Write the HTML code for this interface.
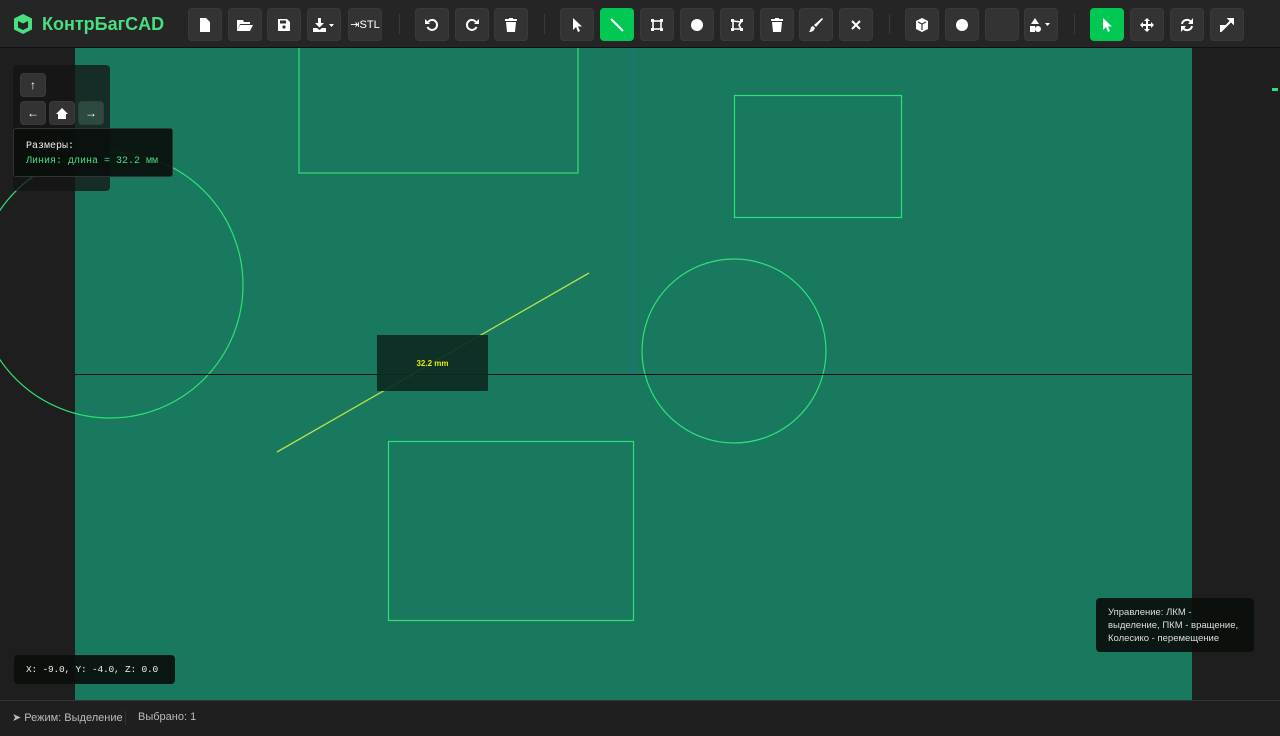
<!DOCTYPE html><html><head><meta charset="utf-8"><style>
*{margin:0;padding:0;box-sizing:border-box}
body{width:1280px;height:736px;overflow:hidden;background:#1e1e1e;font-family:"Liberation Sans",sans-serif;position:relative}
.tb{position:absolute;left:0;top:0;width:1280px;height:48px;background:#252525;border-bottom:1px solid #111;z-index:5}
.b{position:absolute;top:8px;width:34px;height:33px;background:#333;border-radius:4px;border:1px solid #3a3a3a;color:#fff;font-size:13px;display:flex;align-items:center;justify-content:center}
.g{background:#00c853;border-color:#00c853}
.sep{position:absolute;top:14px;width:1px;height:20px;background:#3a3a3a}
.logo{position:absolute;left:12px;top:13px;color:#4ade80;font-weight:bold;font-size:18px;display:flex;align-items:center;gap:8px}
.cv{position:absolute;left:75px;top:48px;width:1117px;height:652px;background:#19795e}
.st{position:absolute;left:0;top:700px;width:1280px;height:36px;background:#1f1f1f;border-top:1px solid #333;color:#bbb;font-size:11px}
.mono{font-family:"Liberation Mono",monospace}
</style></head><body>
<div class="tb">
<div class="logo"><svg width="22" height="22" viewBox="0 0 22 22"><path d="M11 1L20 5.5V16.5L11 21L2 16.5V5.5Z" fill="#4ade80"/><path d="M6 8L11 10.5L16 8V14.5L11 17L6 14.5Z" fill="#252525"/></svg>КонтрБагCAD</div>
<div class="b" style="left:188px"><svg width="12" height="14"><path d="M1 0H7L11 4V14H1Z" fill="#fff"/></svg></div>
<div class="b" style="left:228px"><svg width="16" height="12"><path d="M0 1H6L7 3H13V5H3L0 12Z M3 6H16L13 12H0Z" fill="#fff"/></svg></div>
<div class="b" style="left:267px"><svg width="12" height="12"><path d="M0 0H9L12 3V12H0Z" fill="#fff"/><rect x="2" y="1.5" width="6" height="3" fill="#333"/><circle cx="6" cy="8" r="1.6" fill="#333"/></svg></div>
<div class="b" style="left:307px"><svg width="22" height="14"><path d="M5 0H8V5H11L6.5 9.5L2 5H5Z M0 10H4L6.5 12L9 10H13V14H0Z" fill="#fff"/><path d="M16 6H21L18.5 9Z" fill="#fff"/></svg></div>
<div class="b" style="left:348px;font-size:11px">⇥STL</div>
<div class="sep" style="left:399px"></div>
<div class="b" style="left:415px"><svg width="14" height="14"><path d="M3 4A5 5 0 1 1 2.5 9" fill="none" stroke="#fff" stroke-width="2"/><path d="M0 1V6H5Z" fill="#fff"/></svg></div>
<div class="b" style="left:455px"><svg width="14" height="14"><path d="M11 4A5 5 0 1 0 11.5 9" fill="none" stroke="#fff" stroke-width="2"/><path d="M14 1V6H9Z" fill="#fff"/></svg></div>
<div class="b" style="left:494px"><svg width="12" height="14"><rect x="0" y="1" width="12" height="2" fill="#fff"/><rect x="4" y="0" width="4" height="2" fill="#fff"/><path d="M1 4H11L10 14H2Z" fill="#fff"/></svg></div>
<div class="sep" style="left:544px"></div>
<div class="b" style="left:560px"><svg width="10" height="14"><path d="M1 0V12L4 9L6 14L8 13L6 8.5H10Z" fill="#fff"/></svg></div>
<div class="b g" style="left:600px"><svg width="16" height="16"><line x1="2" y1="2" x2="14" y2="14" stroke="#fff" stroke-width="2"/></svg></div>
<div class="b" style="left:640px"><svg width="12" height="12"><rect x="2" y="2" width="8" height="8" fill="none" stroke="#fff" stroke-width="1.6"/><rect x="0" y="0" width="3" height="3" fill="#fff"/><rect x="9" y="0" width="3" height="3" fill="#fff"/><rect x="0" y="9" width="3" height="3" fill="#fff"/><rect x="9" y="9" width="3" height="3" fill="#fff"/></svg></div>
<div class="b" style="left:680px"><svg width="14" height="14"><circle cx="7" cy="7" r="6" fill="#fff"/></svg></div>
<div class="b" style="left:720px"><svg width="12" height="12"><path d="M2 2L10 3L8 6L10 10H2Z" fill="none" stroke="#fff" stroke-width="1.6"/><rect x="0" y="0" width="3" height="3" fill="#fff"/><rect x="9" y="0" width="3" height="3" fill="#fff"/><rect x="0" y="9" width="3" height="3" fill="#fff"/><rect x="9" y="9" width="3" height="3" fill="#fff"/></svg></div>
<div class="b" style="left:760px"><svg width="12" height="14"><rect x="0" y="1" width="12" height="2" fill="#fff"/><rect x="4" y="0" width="4" height="2" fill="#fff"/><path d="M1 4H11L10 14H2Z" fill="#fff"/></svg></div>
<div class="b" style="left:799px"><svg width="14" height="14"><path d="M13 0L14 1L7 9L5 7Z" fill="#fff"/><path d="M4 8L6 10C5 13 3 14 0 14C2 12 1 9 4 8Z" fill="#fff"/></svg></div>
<div class="b" style="left:839px"><svg width="10" height="10"><path d="M1 1L9 9M9 1L1 9" stroke="#fff" stroke-width="2"/></svg></div>
<div class="sep" style="left:889px"></div>
<div class="b" style="left:905px"><svg width="12" height="14"><path d="M6 0L12 3V11L6 14L0 11V3Z" fill="#fff"/><path d="M2 4L6 6L10 4" stroke="#333" fill="none" stroke-width="1.2"/><path d="M6 6V12" stroke="#333" stroke-width="1.2"/></svg></div>
<div class="b" style="left:945px"><svg width="14" height="14"><circle cx="7" cy="7" r="6" fill="#fff"/></svg></div>
<div class="b" style="left:985px"></div>
<div class="b" style="left:1024px"><svg width="22" height="14"><path d="M5 0L9 6H1Z" fill="#fff"/><rect x="0" y="8" width="5" height="6" fill="#fff"/><circle cx="8" cy="11" r="3" fill="#fff"/><path d="M15 5H20L17.5 8Z" fill="#fff"/></svg></div>
<div class="sep" style="left:1074px"></div>
<div class="b g" style="left:1090px"><svg width="10" height="14"><path d="M1 0V12L4 9L6 14L8 13L6 8.5H10Z" fill="#fff"/></svg></div>
<div class="b" style="left:1130px"><svg width="14" height="14"><path d="M7 0L10 3H8V6H11V4L14 7L11 10V8H8V11H10L7 14L4 11H6V8H3V10L0 7L3 4V6H6V3H4Z" fill="#fff"/></svg></div>
<div class="b" style="left:1170px"><svg width="14" height="14"><path d="M2 6A5 5 0 0 1 11 4M12 8A5 5 0 0 1 3 10" fill="none" stroke="#fff" stroke-width="2"/><path d="M13 0V6H8Z M1 14V8H6Z" fill="#fff"/></svg></div>
<div class="b" style="left:1210px"><svg width="14" height="14"><path d="M8 0H14V6Z M0 14V8H6Z M12 2L2 12" fill="#fff" stroke="#fff" stroke-width="2"/></svg></div>
</div>
<div class="cv"></div>
<svg style="position:absolute;left:0;top:0" width="1280" height="736">
<g fill="none" stroke="#2ee07a" stroke-width="1.2">
<rect x="299" y="40" width="279" height="133"/>
<rect x="734.5" y="95.5" width="167" height="122"/>
<rect x="388.5" y="441.5" width="245" height="179"/>
<circle cx="734" cy="351" r="92"/>
<circle cx="110" cy="285" r="133"/>
</g>
<line x1="633.5" y1="48" x2="633.5" y2="375" stroke="#1e6fa0" stroke-width="1"/>
<line x1="75" y1="374.5" x2="1192" y2="374.5" stroke="#111" stroke-width="1"/>
<line x1="277" y1="452" x2="589" y2="273" stroke="#b4e04a" stroke-width="1.3"/>
<rect x="377" y="335" width="111" height="56" fill="#0c2b22" opacity=".92"/>
<text x="432.5" y="366" fill="#e8e800" font-size="8" font-weight="bold" text-anchor="middle" font-family="Liberation Sans">32.2 mm</text>
<rect x="1272" y="88" width="6" height="3" fill="#2ee07a"/>
</svg>
<div style="position:absolute;left:13px;top:65px;width:97px;height:126px;background:rgba(20,20,20,.75);border-radius:4px"></div>
<div class="b" style="left:20px;top:73px;width:26px;height:24px;font-size:12px">↑</div>
<div class="b" style="left:20px;top:101px;width:26px;height:24px;font-size:12px">←</div>
<div class="b" style="left:49px;top:101px;width:26px;height:24px;font-size:12px"><svg width="12" height="11"><path d="M6 0L12 6H10V11H2V6H0Z" fill="#fff"/></svg></div>
<div class="b" style="left:78px;top:101px;width:26px;height:24px;font-size:12px;background:#2d4a40">→</div>
<div class="mono" style="position:absolute;left:13px;top:128px;width:160px;height:49px;background:rgba(10,15,12,.92);border:1px solid #333;border-radius:3px;font-size:10px;padding:10px 12px;line-height:15px"><div style="color:#eee">Размеры:</div><div style="color:#4ade80">Линия: длина = 32.2 мм</div></div>
<div class="mono" style="position:absolute;left:14px;top:655px;width:161px;height:29px;background:rgba(10,15,12,.92);border-radius:4px;color:#eee;font-size:9.5px;padding:9px 12px;white-space:nowrap;letter-spacing:-0.2px">X: -9.0, Y: -4.0, Z: 0.0</div>
<div style="position:absolute;left:1096px;top:598px;width:158px;height:54px;background:rgba(10,15,12,.92);border-radius:4px;color:#ddd;font-size:9.5px;padding:8px 12px;line-height:13px">Управление: ЛКМ - выделение, ПКМ - вращение, Колесико - перемещение</div>
<div class="st"><span style="position:absolute;left:12px;top:10px">➤ Режим: Выделение</span><span style="position:absolute;left:125px;top:10px;width:1px;height:14px;background:#333"></span><span style="position:absolute;left:138px;top:10px">Выбрано: 1</span></div>
</body></html>
